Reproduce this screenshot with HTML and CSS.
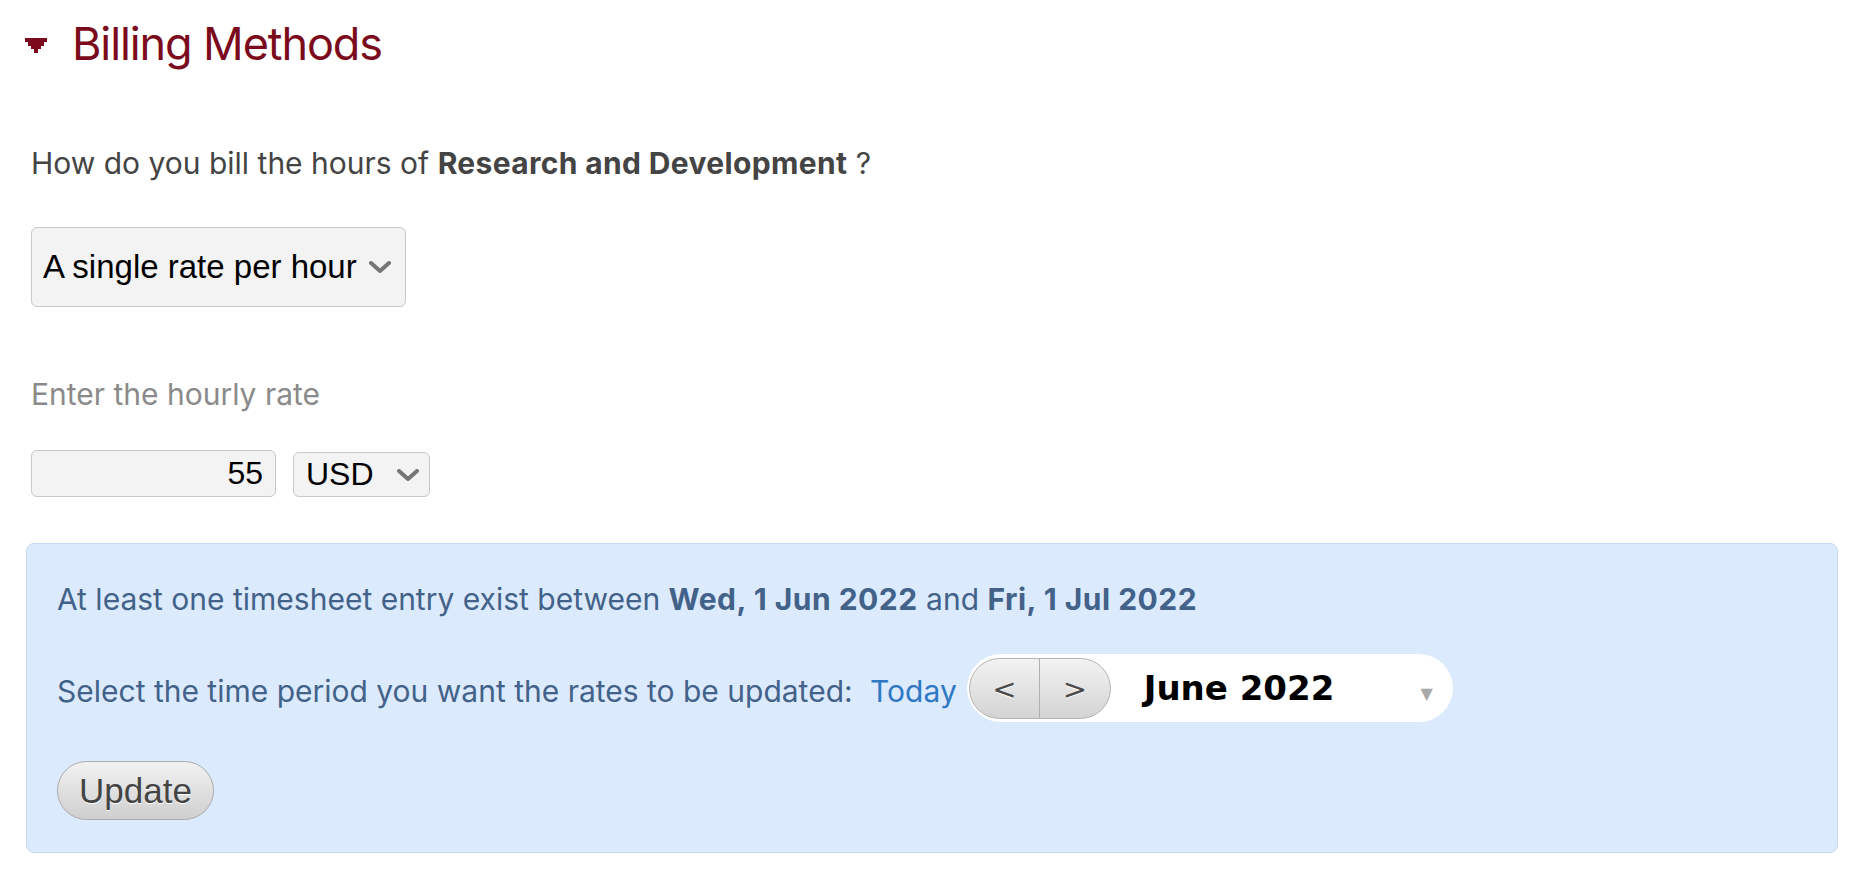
FILE: index.html
```html
<!DOCTYPE html>
<html lang="en">
<head>
<meta charset="utf-8">
<title>Billing Methods</title>
<link rel="stylesheet" href="styles.css">
</head>
<body>
<section class="section">
  <header class="header">
    <svg class="toggle" width="22" height="15" viewBox="0 0 22 15"><polygon points="0,0 22,0 22,4 19,4 19,8 16,8 16,11 13,11 13,15 9,15 9,11 6,11 6,8 3,8 3,4 0,4" fill="#7b0b1c"/></svg>
    <h1 class="title">Billing Methods</h1>
  </header>

  <div class="content">
    <p class="question">How do you bill the hours of <b>Research and Development</b> ?</p>

    <div class="select select-method">
      <span class="select-text">A single rate per hour</span>
      <svg class="chev" width="22" height="12" viewBox="0 0 22 12"><polyline points="2,2 11,10 20,2" fill="none" stroke="#767676" stroke-width="4" stroke-linecap="round" stroke-linejoin="round"/></svg>
    </div>

    <p class="label">Enter the hourly rate</p>

    <div class="rate-row">
      <input class="rate-input" type="text" value="55">
      <div class="select select-currency">
        <span class="select-text">USD</span>
        <svg class="chev" width="22" height="12" viewBox="0 0 22 12"><polyline points="2,2 11,10 20,2" fill="none" stroke="#767676" stroke-width="4" stroke-linecap="round" stroke-linejoin="round"/></svg>
      </div>
    </div>
  </div>

  <div class="notice">
    <p class="notice-line">At least one timesheet entry exist between <b>Wed, 1 Jun 2022</b> and <b>Fri, 1 Jul 2022</b></p>
    <div class="period-row">
      <span class="notice-line period-text">Select the time period you want the rates to be updated: <a class="today" href="#">Today</a></span>
      <div class="period-picker">
        <div class="nav-group">
          <span class="nav-btn">&lt;</span>
          <span class="nav-btn">&gt;</span>
        </div>
        <span class="period-label">June 2022</span>
        <span class="period-arrow">▼</span>
      </div>
    </div>
    <button class="update-btn" type="button">Update</button>
  </div>
</section>
</body>
</html>
```

FILE: styles.css
```css
html, body {
  margin: 0;
  padding: 0;
  background: #ffffff;
}

body {
  font-family: Inter, "Liberation Sans", sans-serif;
  color: #444444;
}

.section {
  padding: 14px 28px 0 26px;
}

.header {
  display: flex;
  align-items: center;
  height: 60px;
}

.toggle {
  display: block;
  margin-left: -1px;
  margin-top: 2px;
}

.title {
  margin: 0 0 0 25px;
  font-size: 45px;
  line-height: 60px;
  font-weight: 400;
  color: #7b0b1c;
  letter-spacing: -1.1px;
}

.content {
  padding-left: 5px;
}

.question {
  margin: 69px 0 0 0;
  font-size: 30px;
  line-height: 40px;
  color: #444444;
}

.question b {
  font-weight: 700;
  letter-spacing: 0.35px;
}

.select {
  display: inline-flex;
  align-items: center;
  box-sizing: border-box;
  background: #f3f3f3;
  border: 1.5px solid #c8c8c8;
  border-radius: 6px;
  font-family: "Liberation Sans", Arial, sans-serif;
  color: #000000;
}

.select-method {
  margin-top: 44px;
  width: 375px;
  height: 80px;
  padding: 0 14px 0 11px;
  font-size: 33px;
  justify-content: space-between;
}

.chev {
  display: block;
  flex: none;
}

.label {
  margin: 67px 0 0 0;
  font-size: 30px;
  line-height: 40px;
  color: #8a8a8a;
}

.rate-row {
  display: flex;
  align-items: flex-end;
  gap: 17px;
  margin-top: 36px;
}

.rate-input {
  box-sizing: border-box;
  width: 245px;
  height: 47px;
  margin: 0;
  padding: 0 12px 0 12px;
  background: #f3f3f3;
  border: 1.5px solid #c8c8c8;
  border-radius: 6px;
  font-family: "Liberation Sans", Arial, sans-serif;
  font-size: 32px;
  color: #000000;
  text-align: right;
  outline: none;
}

.select-currency {
  width: 137px;
  height: 45px;
  padding: 0 10px 0 12px;
  font-size: 32px;
  justify-content: space-between;
}

.notice {
  margin-top: 46px;
  box-sizing: border-box;
  background: #dceafd;
  border: 1.5px solid #c6d9f1;
  border-radius: 8px;
  padding: 35px 30px 32px 30px;
}

.notice-line {
  margin: 0;
  font-size: 30px;
  line-height: 40px;
  color: #42628a;
}

.notice-line b {
  font-weight: 700;
  letter-spacing: 0.5px;
}

.period-row {
  display: flex;
  align-items: flex-start;
  margin-top: 35px;
  height: 68px;
}

.period-text {
  margin-top: 17px;
  white-space: nowrap;
}

.today {
  color: #2f78c4;
  text-decoration: none;
  margin-left: 9px;
}

.period-picker {
  display: flex;
  align-items: center;
  box-sizing: border-box;
  width: 486px;
  height: 68px;
  margin-left: 10px;
  padding: 0 20px 0 2px;
  background: #ffffff;
  border-radius: 34px;
}

.nav-group {
  display: flex;
  box-sizing: border-box;
  width: 142px;
  height: 61px;
  border: 1.5px solid #b4b4b4;
  border-radius: 31px;
  background: linear-gradient(#f3f3f3, #d3d3d3);
  overflow: hidden;
}

.nav-btn {
  flex: 1;
  display: flex;
  align-items: center;
  justify-content: center;
  font-family: "DejaVu Sans", sans-serif;
  font-size: 29px;
  color: #4a4a4a;
  text-shadow: 0 1px 0 #ffffff;
  padding-top: 2px;
}

.nav-btn + .nav-btn {
  border-left: 1.5px solid #b0b0b0;
}

.period-label {
  margin-left: 33px;
  font-family: "DejaVu Sans", sans-serif;
  font-weight: 700;
  font-size: 34px;
  color: #000000;
  flex: 1;
}

.period-arrow {
  font-family: "DejaVu Sans", sans-serif;
  font-size: 16px;
  color: #a8a8a8;
  margin-top: 10px;
}

.update-btn {
  display: block;
  margin-top: 39px;
  box-sizing: border-box;
  width: 157px;
  height: 59px;
  padding: 0;
  border: 1.5px solid #ababab;
  border-radius: 30px;
  background: linear-gradient(#f2f2f2, #cfcfcf);
  font-family: "Liberation Sans", Arial, sans-serif;
  font-size: 35px;
  color: #444444;
  text-shadow: 0 1px 0 #ffffff;
  cursor: pointer;
}
```
